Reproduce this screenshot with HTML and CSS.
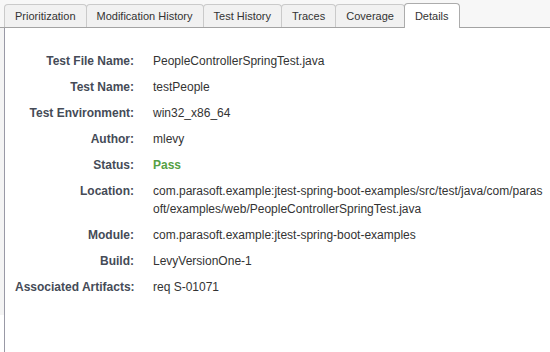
FILE: index.html
```html
<!DOCTYPE html>
<html lang="en">
<head>
  <meta charset="UTF-8">
  <title>Test Details</title>
  <link rel="stylesheet" href="styles.css">
</head>
<body>

  <div class="tabs">
    <div class="tab">Prioritization</div>
    <div class="tab">Modification History</div>
    <div class="tab">Test History</div>
    <div class="tab">Traces</div>
    <div class="tab">Coverage</div>
    <div class="tab active">Details</div>
  </div>

  <div class="panel">
    <div class="details">
      <div class="label">Test File Name:</div>
      <div class="value">PeopleControllerSpringTest.java</div>

      <div class="label">Test Name:</div>
      <div class="value">testPeople</div>

      <div class="label">Test Environment:</div>
      <div class="value">win32_x86_64</div>

      <div class="label">Author:</div>
      <div class="value">mlevy</div>

      <div class="label">Status:</div>
      <div class="value status-pass">Pass</div>

      <div class="label">Location:</div>
      <div class="value">com.parasoft.example:jtest-spring-boot-examples/src/test/java/com/parasoft/examples/web/PeopleControllerSpringTest.java</div>

      <div class="label">Module:</div>
      <div class="value">com.parasoft.example:jtest-spring-boot-examples</div>

      <div class="label">Build:</div>
      <div class="value">LevyVersionOne-1</div>

      <div class="label">Associated Artifacts:</div>
      <div class="value">req S-01071</div>
    </div>
  </div>

</body>
</html>
```

FILE: styles.css
```css
html, body { height: 100%; }
body {
  margin: 0;
  font-family: "Liberation Sans", Arial, sans-serif;
  background: linear-gradient(#f4f4f4, #f4f4f4) 0 0 / 100% 315px no-repeat, #fff;
  display: flex;
  flex-direction: column;
}
.tabs {
  display: flex;
  align-items: flex-end;
  padding: 4px 0 0 4px;
  background: #f7f7f7;
  border-bottom: 1px solid #a3a3a3;
  height: 28px;
  box-sizing: border-box;
}
.tab {
  height: 23px;
  box-sizing: border-box;
  padding: 0 10px;
  margin-right: -1px;
  line-height: 22px;
  font-size: 11px;
  color: #333;
  background: #f1f1f1;
  border: 1px solid #cacaca;
  border-bottom: none;
  border-radius: 4px 4px 0 0;
  cursor: pointer;
}
.tab.active {
  position: relative;
  height: 25px;
  margin-bottom: -1px;
  line-height: 24px;
  background: #fff;
  border-color: #acacac;
  z-index: 1;
}
.panel {
  flex: 1;
  margin-left: 4px;
  border-left: 1px solid #9999a6;
  background: #fff;
}
.details {
  display: grid;
  grid-template-columns: 119px 1fr;
  column-gap: 19px;
  row-gap: 8px;
  padding: 24px 5px 0 10px;
  font-size: 12px;
  line-height: 18px;
}
.label {
  text-align: right;
  font-weight: bold;
  color: #454b57;
  white-space: nowrap;
}
.value {
  color: #333;
  word-break: break-all;
}
.status-pass {
  color: #55a044;
  font-weight: bold;
}
```
